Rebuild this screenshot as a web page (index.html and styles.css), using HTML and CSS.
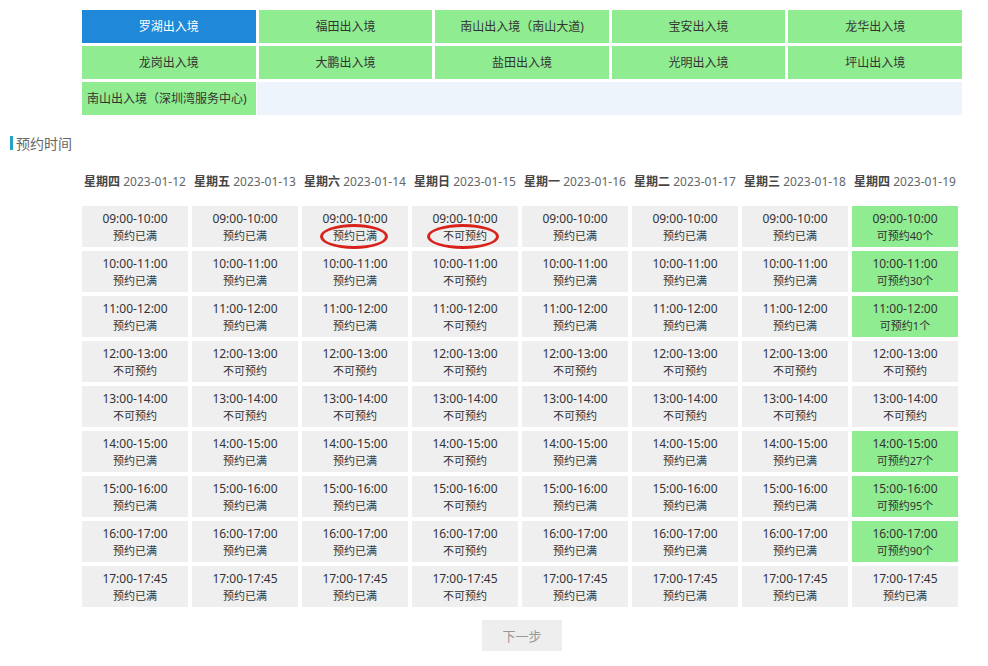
FILE: index.html
```html
<!DOCTYPE html>
<html lang="zh-CN">
<head>
    <meta charset="UTF-8">
    <meta name="viewport" content="width=device-width, initial-scale=1.0">
    <title>预约时间</title>
    <link rel="stylesheet" href="styles.css">
</head>
<body>

    <!-- 出入境办理点 -->
    <div class="tabs">
        <div class="tab active">罗湖出入境</div>
        <div class="tab">福田出入境</div>
        <div class="tab">南山出入境（南山大道)</div>
        <div class="tab">宝安出入境</div>
        <div class="tab">龙华出入境</div>
        <div class="tab">龙岗出入境</div>
        <div class="tab">大鹏出入境</div>
        <div class="tab">盐田出入境</div>
        <div class="tab">光明出入境</div>
        <div class="tab">坪山出入境</div>
        <div class="tab tab-left">南山出入境（深圳湾服务中心)</div>
        <div class="tab-fill"></div>
    </div>

    <h3 class="section-title"><span class="bar"></span>预约时间</h3>

    <!-- 时间表 -->
    <div class="schedule" id="schedule"></div>

    <div class="actions">
        <button class="next-button">下一步</button>
    </div>

    <script>
        const days = [
            {week: "星期四", date: "2023-01-12"},
            {week: "星期五", date: "2023-01-13"},
            {week: "星期六", date: "2023-01-14"},
            {week: "星期日", date: "2023-01-15"},
            {week: "星期一", date: "2023-01-16"},
            {week: "星期二", date: "2023-01-17"},
            {week: "星期三", date: "2023-01-18"},
            {week: "星期四", date: "2023-01-19"}
        ];
        const slots = ["09:00-10:00", "10:00-11:00", "11:00-12:00", "12:00-13:00", "13:00-14:00",
                       "14:00-15:00", "15:00-16:00", "16:00-17:00", "17:00-17:45"];

        const FULL = "预约已满", NO = "不可预约";
        const normal = [FULL, FULL, FULL, NO, NO, FULL, FULL, FULL, FULL];
        const status = [
            normal, normal, normal,
            [NO, NO, NO, NO, NO, NO, NO, NO, NO],
            normal, normal, normal,
            [40, 30, 1, NO, NO, 27, 95, 90, FULL]
        ];
        // 截图上的红圈标注
        const marks = {"2-0": "mark mark-a", "3-0": "mark mark-b"};

        const schedule = document.getElementById("schedule");
        days.forEach(day => {
            const head = document.createElement("div");
            head.className = "day-head";
            head.innerHTML = `<b>${day.week}</b> ${day.date}`;
            schedule.appendChild(head);
        });
        slots.forEach((slot, r) => {
            days.forEach((day, c) => {
                const s = status[c][r];
                const cell = document.createElement("div");
                cell.className = typeof s === "number" ? "cell open" : "cell";
                const text = typeof s === "number" ? `可预约${s}个` : s;
                cell.innerHTML = `<span class="slot-time">${slot}</span><span class="slot-state">${text}</span>`;
                const m = marks[c + "-" + r];
                if (m) {
                    const ring = document.createElement("span");
                    ring.className = m;
                    cell.appendChild(ring);
                }
                schedule.appendChild(cell);
            });
        });
    </script>
</body>
</html>
```

FILE: styles.css
```css
body {
    margin: 0;
    padding-top: 10px;
    font-family: "Noto Sans", "Noto Sans CJK SC", sans-serif;
    background-color: #fff;
    color: #333;
}

.tabs {
    margin-left: 82px;
    width: 880px;
    display: grid;
    grid-template-columns: repeat(5, 1fr);
    gap: 3px 3px;
}

.tab {
    height: 33px;
    line-height: 33px;
    background-color: #90ec90;
    text-align: center;
    font-size: 12px;
    color: #333;
    white-space: nowrap;
    cursor: pointer;
}

.tab.active {
    background-color: #1f88d9;
    color: #fff;
}

.tab-left {
    text-align: left;
    padding-left: 5px;
}

.tab-fill {
    grid-column: 2 / 6;
    margin-left: -2px;
    background-color: #eef4fb;
}

.section-title {
    margin: 18px 0 0 10px;
    height: 20px;
    display: flex;
    align-items: center;
    font-size: 14px;
    font-weight: normal;
    color: #666;
}

.bar {
    width: 3px;
    height: 14px;
    background-color: #26a2c8;
    margin-right: 3px;
}

.schedule {
    margin: 19px 0 0 82px;
    width: 876px;
    display: grid;
    grid-template-columns: repeat(8, 106px);
    grid-template-rows: 30px;
    grid-auto-rows: 41px;
    gap: 4px;
}

.day-head {
    height: 20px;
    line-height: 20px;
    text-align: center;
    font-size: 12px;
    color: #666;
    white-space: nowrap;
}

.day-head b {
    color: #444;
    font-weight: 600;
}

.cell {
    position: relative;
    background-color: #efefef;
    display: flex;
    flex-direction: column;
    align-items: center;
    justify-content: center;
    font-size: 12px;
    line-height: 17px;
}

.cell.open {
    background-color: #90ec90;
}

.slot-state {
    font-size: 11px;
}

.mark {
    position: absolute;
    top: 18px;
    height: 19px;
    border: 3px solid #d8231b;
    border-radius: 50%;
}

.mark-a {
    left: 18px;
    width: 62px;
}

.mark-b {
    left: 15px;
    width: 66px;
}

.actions {
    margin: 13px 0 0 82px;
    width: 880px;
    display: flex;
    justify-content: center;
}

.next-button {
    width: 80px;
    height: 31px;
    border: none;
    background-color: #eee;
    color: #999;
    font-family: "Noto Sans CJK SC", sans-serif;
    font-size: 13px;
    cursor: pointer;
}
```
